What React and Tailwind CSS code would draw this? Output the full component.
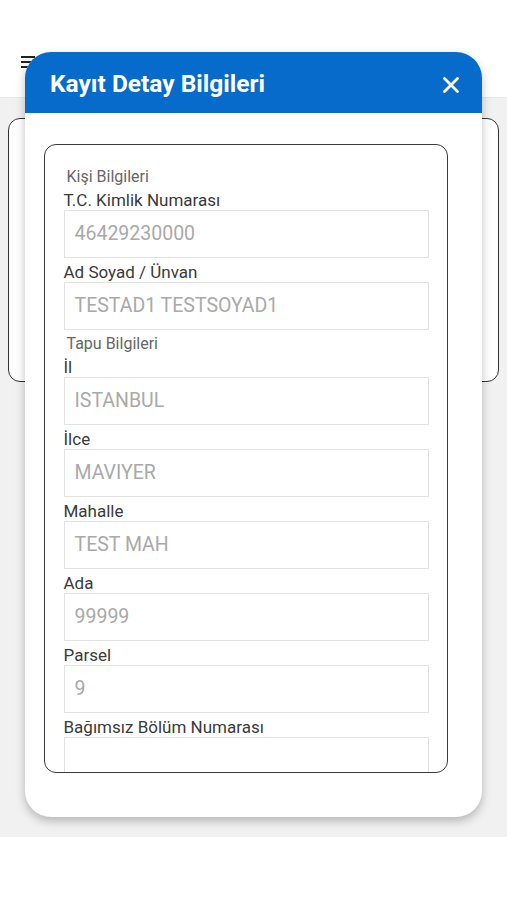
import { X } from 'lucide-react'

const fields = [
  { heading: 'Kişi Bilgileri' },
  { label: 'T.C. Kimlik Numarası', value: '46429230000' },
  { label: 'Ad Soyad / Ünvan', value: 'TESTAD1 TESTSOYAD1' },
  { heading: 'Tapu Bilgileri' },
  { label: 'İl', value: 'ISTANBUL' },
  { label: 'İlce', value: 'MAVIYER' },
  { label: 'Mahalle', value: 'TEST MAH' },
  { label: 'Ada', value: '99999' },
  { label: 'Parsel', value: '9' },
  { label: 'Bağımsız Bölüm Numarası', value: '' },
]

export default function App() {
  let prev = null
  return (
    <div className="relative w-[507px] h-[900px] bg-white overflow-hidden" style={{ fontFamily: 'Roboto, "Noto Sans", sans-serif' }}>
      {/* page behind the modal */}
      <div className="h-[98px] bg-white border-b border-[#e6e6e6] px-[21px] pt-[56px]">
        <svg width="14" height="14" viewBox="0 0 14 14">
          <rect x="0" y="0" width="14" height="2" fill="#222" />
          <rect x="0" y="5" width="11" height="2" fill="#222" />
          <rect x="0" y="10" width="8" height="2" fill="#222" />
        </svg>
      </div>
      <div className="h-[739px] bg-[#f1f1f1] pt-[20px] px-[8px]">
        <div className="h-[264px] bg-white border-[1.5px] border-[#333] rounded-[12px]" />
      </div>

      {/* modal */}
      <div className="absolute left-[25px] top-[52px] w-[457px] h-[765px] flex flex-col rounded-[26px] bg-white shadow-[0_4px_10px_rgba(0,0,0,0.25)]">
        <div className="h-[61px] bg-[#066bcb] rounded-t-[26px] flex items-center justify-between pl-[25px] pr-[18px] pt-[4px]">
          <span className="text-white text-[24.5px] font-bold">Kayıt Detay Bilgileri</span>
          <X className="text-white" size={26} strokeWidth={2.6} />
        </div>
        <div className="flex-1 pt-[31px] pl-[19px]">
          <div className="w-[404px] h-[629px] border-[1.5px] border-[#3a3a3a] rounded-[12px] overflow-hidden pt-[20px] pl-[18.5px] pr-[18px]">
            {fields.map((f, i) => {
              const mt = i === 0 ? 'mt-0' : prev === 'input' ? 'mt-[2px]' : 'mt-[1px]'
              if (f.heading) {
                prev = 'heading'
                return (
                  <div key={i} className={`${mt} h-[22px] leading-[24px] pl-[3px] text-[16px] text-[#666]`}>
                    {f.heading}
                  </div>
                )
              }
              prev = 'input'
              return (
                <div key={i}>
                  <div className={`${mt} h-[22px] leading-[24px] text-[17px] text-[#3a3a3a]`}>{f.label}</div>
                  <div className="h-[48px] border-[1.5px] border-[#e2e2e2] flex items-center pl-[10px] text-[19.5px] text-[#a9a9a9]">
                    {f.value}
                  </div>
                </div>
              )
            })}
          </div>
        </div>
      </div>
    </div>
  )
}
